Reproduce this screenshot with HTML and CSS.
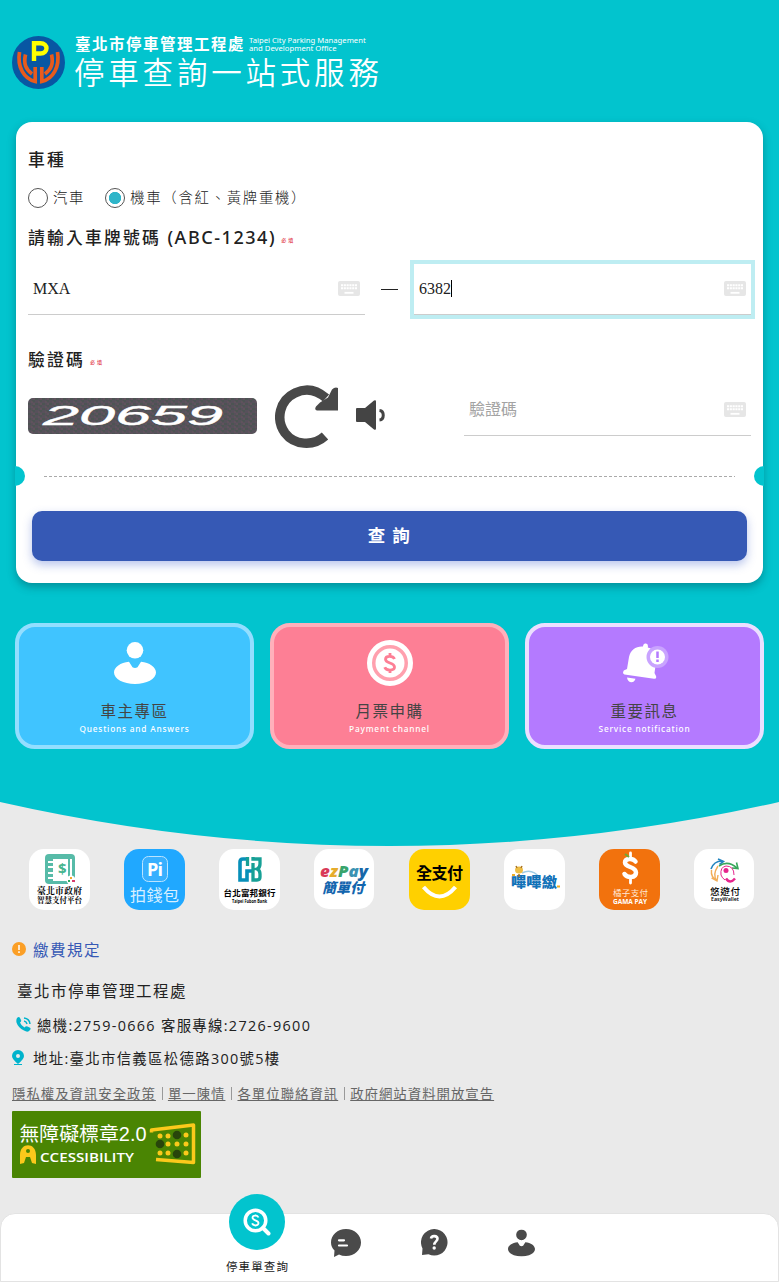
FILE: index.html
```html
<!DOCTYPE html>
<html lang="zh-Hant">
<head>
<meta charset="utf-8">
<title>停車查詢一站式服務</title>
<link rel="stylesheet" href="styles.css">
</head>
<body>
<svg class="defs" width="0" height="0" aria-hidden="true">
  <symbol id="keyboard" viewBox="0 0 22 15">
    <rect width="22" height="15" rx="2" fill="#e6e6e6"/>
    <path d="M3 4.200h16M3 7.200h16" stroke="#fff" stroke-width="2" stroke-dasharray="2.100 .7"/>
    <path d="M6.500 11.800h9" stroke="#fff" stroke-width="1.800"/>
  </symbol>
  <symbol id="person" viewBox="0 0 42 42">
    <circle cx="21" cy="8.300" r="8.300"/>
    <path d="M15 19.700C6.500 20.500 0 25 0 30.500 0 37 9.400 42 21 42s21-5 21-11.500c0-5.500-6.500-10-15-10.800l-3.500 5.500q-2.500 1.500-5 0z"/>
  </symbol>
</svg>
<div class="hero">
  <header class="header">
    <svg class="logo" viewBox="0 0 53 53">
      <circle cx="26.500" cy="26.500" r="26.500" fill="#0857a3"/>
      <g fill="none" stroke="#e95b1c" stroke-width="3.700">
        <path d="M7.500 16C5 31 12 43 23.200 45.500V31"/>
        <path d="M13.500 18.500C11.500 28 13.500 33 20 38"/>
        <path d="M45.500 16C48 31 41 43 29.800 45.500V31"/>
        <path d="M39.500 18.500C41.500 28 39.500 33 33 38"/>
      </g>
      <path d="M22 25V7.200h6.500c8 0 8 10.300 0 10.300H22" fill="none" stroke="#ff0" stroke-width="4.400"/>
    </svg>
    <div class="brand">
      <div class="brand-top">
        <span class="brand-name">臺北市停車管理工程處</span>
        <span class="brand-en">Taipei City Parking Management<br>and Development Office</span>
      </div>
      <h1 class="brand-title">停車查詢一站式服務</h1>
    </div>
  </header>

  <main class="card">
    <h2 class="label label-type">車種</h2>
    <div class="radios">
      <span class="radio"></span><span class="radio-text">汽車</span>
      <span class="radio radio-on"></span><span class="radio-text">機車（含紅、黃牌重機）</span>
    </div>
    <h2 class="label label-plate"><span>請輸入車牌號碼 <span class="sample">(ABC-1234)</span></span><small class="required">必填</small></h2>
    <div class="plate">
      <div class="field"><span>MXA</span><svg class="kb"><use href="#keyboard"/></svg></div>
      <span class="dash"></span>
      <div class="field focused"><span class="caret">6382</span><svg class="kb"><use href="#keyboard"/></svg></div>
    </div>
    <h2 class="label label-code">驗證碼<small class="required">必填</small></h2>
    <div class="verify">
      <svg class="captcha" viewBox="0 0 229 36">
        <defs><pattern id="noise" width="7" height="5" patternUnits="userSpaceOnUse">
          <rect width="7" height="5" fill="#57515b"/><path d="M0 1h3M4 3h3" stroke="#42574b"/><path d="M3 4h2M5 1h2" stroke="#69545f"/>
        </pattern></defs>
        <rect width="229" height="36" rx="5" fill="url(#noise)"/>
        <text x="15" y="26.500" textLength="180" lengthAdjust="spacingAndGlyphs" class="captcha-text">20659</text>
      </svg>
      <svg class="refresh" viewBox="0 0 63 63">
        <path d="M50 51C38 62 19 60 10 48 0 34 5 15 20 8q16-8 31 5" fill="none" stroke="#484848" stroke-width="9.500"/>
        <path d="M63 3v22.500H42q-3-1-1-4l4-4 8-5 4-8q3-3 6-1.500z" fill="#484848"/>
      </svg>
      <svg class="speaker" viewBox="0 0 29 30">
        <path d="M1 8h8l9-7.500q2-1 2 1v27q0 2-2 1L9 22H1q-1 0-1-1V9q0-1 1-1z" fill="#444"/>
        <path d="M23.500 10.500c5 .5 5 9 0 9.500" fill="none" stroke="#444" stroke-width="3"/>
      </svg>
      <div class="field code"><span class="placeholder">驗證碼</span><svg class="kb"><use href="#keyboard"/></svg></div>
    </div>
    <div class="tear"></div>
    <button class="submit">查 詢</button>
  </main>

  <nav class="tiles">
    <a class="tile blue">
      <svg class="tile-icon person" viewBox="0 0 42 42"><use href="#person"/></svg>
      <span class="tile-name">車主專區</span><span class="tile-en">Questions and Answers</span>
    </a>
    <a class="tile pink">
      <svg class="tile-icon coin" viewBox="0 0 46 46">
        <circle cx="23" cy="23" r="20.500" fill="#ffa0ae" stroke="#fff" stroke-width="5"/>
        <circle cx="23" cy="23" r="14.500"/>
        <path d="M27.500 19c-1.500-3.500-9-3.500-9 .3 0 4.500 9 3 9 7.700 0 4-8.500 4-9.800.3M23 13v3m0 14v3" fill="none" stroke="#fd7f95" stroke-width="2.800"/>
      </svg>
      <span class="tile-name">月票申購</span><span class="tile-en">Payment channel</span>
    </a>
    <a class="tile purple">
      <svg class="tile-icon bell" viewBox="0 0 46 40">
        <path d="M20 3.500q.3-3.500 3-3 2.500.5 1.800 4C33 7 34 12 33 19l-1.500 11 1.500 3q1 3-2 2.800L1.500 31.500Q-1 30.500.8 27.500L4 26l2-12C7.500 7 13 3 20 3.500zM4 34.500l8.500 1.200C11 41 4.500 40 4 34.500z"/>
        <circle cx="34.500" cy="14" r="11" fill="#c9a3ff"/>
        <circle cx="34.500" cy="14" r="7.500"/>
        <path d="M34.500 8.500v6.500m0 1.500v2.500" stroke="#b47aff" stroke-width="2.500"/>
      </svg>
      <span class="tile-name">重要訊息</span><span class="tile-en">Service notification</span>
    </a>
  </nav>
</div>
<svg class="wave" viewBox="0 0 779 44" preserveAspectRatio="none"><path d="M0 0Q389.500 88 779 0z" fill="#02c4ce"/></svg>

<section class="apps">
  <svg class="app" viewBox="0 0 61 61">
    <rect width="61" height="61" rx="15" fill="#fff"/>
    <rect x="16" y="5" width="30" height="30" rx="4" fill="#57bba8"/>
    <path d="M24 10h15v22H24z" fill="#fff"/><path d="M42 10v18" stroke="#fff" stroke-width="2"/>
    <path d="M19 13h6m-6 5h6m-6 6h6m-6 5h6" stroke="#fff" stroke-width="2"/>
    <text x="29" y="25" class="t-sans" font-size="15" font-weight="700" fill="#46b58f">$</text>
    <circle cx="42" cy="31" r="4.500" fill="#fff"/><path d="M39 32h2" stroke="#33a75c" stroke-width="2"/><path d="M41 29h2" stroke="#f3a72e" stroke-width="2"/><path d="M43 32h3" stroke="#d83b6b" stroke-width="2"/>
    <text x="8" y="45" textLength="45" class="t-serif" font-size="8.800">臺北市政府</text>
    <text x="8" y="53.500" textLength="45" class="t-serif" font-size="7.500">智慧支付平台</text>
  </svg>
  <svg class="app" viewBox="0 0 61 61">
    <rect width="61" height="61" rx="15" fill="#20a8ff"/>
    <rect x="18.500" y="7.500" width="25" height="25" rx="6" fill="#38b0ff" stroke="#bbe4ff"/>
    <text x="23" y="26.500" textLength="16" class="t-sans" font-size="18" font-weight="700" fill="#fff">Pi</text>
    <text x="6" y="51.500" textLength="49" class="t-sans" font-size="16" fill="#d8efff">拍錢包</text>
  </svg>
  <svg class="app" viewBox="0 0 61 61">
    <rect width="61" height="61" rx="15" fill="#fff"/>
    <path d="M29 10h-5q-3 0-3 3v18h7V22h6" fill="none" stroke="#078fb9" stroke-width="3.600"/>
    <path d="M28.500 8v9M34 8v2h7v5q0 4-3 5 3 1 3 5v3q0 3-3 3h-4V14" fill="none" stroke="#17a096" stroke-width="3.300"/>
    <text x="4.500" y="46.500" textLength="52" class="t-sans" font-size="8.500" font-weight="700">台北富邦銀行</text>
    <text x="13" y="53.500" textLength="35" lengthAdjust="spacingAndGlyphs" class="t-sans" font-size="4.300" font-weight="700">Taipei Fubon Bank</text>
  </svg>
  <svg class="app" viewBox="0 0 61 61">
    <rect width="60" height="60" rx="15" fill="#fff"/>
    <text x="6" y="27.500" textLength="48" lengthAdjust="spacingAndGlyphs" class="t-sans t-slant" font-size="15.500" font-weight="800"><tspan fill="#d93958">e</tspan><tspan fill="#e6ac2c">z</tspan><tspan fill="#38a46c">P</tspan><tspan fill="#3b92b3">a</tspan><tspan fill="#1768a9">y</tspan></text>
    <text x="8" y="43.500" textLength="42" class="t-sans t-slant" font-size="14" font-weight="900" fill="#1265ae">簡單付</text>
  </svg>
  <svg class="app" viewBox="0 0 61 61">
    <rect width="61" height="61" rx="15" fill="#ffd000"/>
    <text x="7" y="30" textLength="47" class="t-sans" font-size="16" font-weight="700">全支付</text>
    <path d="M14.500 38q16 19 32 0" fill="none" stroke="#fff" stroke-width="4"/>
  </svg>
  <svg class="app" viewBox="0 0 61 61">
    <rect width="61" height="61" rx="15" fill="#fff"/>
    <path d="M18 24Q28 19 36 29" fill="none" stroke="#9fcce5" stroke-width="1.500"/>
    <text x="7" y="37.500" textLength="46" lengthAdjust="spacingAndGlyphs" class="t-sans" font-size="14" font-weight="900" fill="#1272b8">嗶嗶繳</text>
    <ellipse cx="15" cy="21" rx="4" ry="3.500" fill="#eebe45"/><path d="M12 17l1 2m5-2-1 2M15 25v3" stroke="#a97320" stroke-width="1.500"/>
    <path d="M53 37.500h3" stroke="#f1ad25" stroke-width="2"/><path d="M8 26h3" stroke="#f1ad25" stroke-width="2"/>
  </svg>
  <svg class="app" viewBox="0 0 61 61">
    <rect width="61" height="61" rx="15" fill="#f2720d"/>
    <path d="M36.500 12.500c-3-4-10.500-3-10.500 1 0 5.500 11 3.500 11 10 0 6-9 5.500-11.500 1.500" fill="none" stroke="#fff" stroke-width="4.500" stroke-linecap="round"/>
    <path d="M31.500 4v6M31.500 29v5" stroke="#fff" stroke-width="2.800" stroke-linecap="round"/>
    <path d="m26 5 4 3" stroke="#70a936" stroke-width="2"/>
    <text x="14" y="47" textLength="35" class="t-sans" font-size="8.500" fill="#ffe8d6">橘子支付</text>
    <text x="14" y="54.800" textLength="34" lengthAdjust="spacingAndGlyphs" class="t-sans" font-size="6.800" font-weight="700" fill="#fff">GAMA PAY</text>
  </svg>
  <svg class="app" viewBox="0 0 61 61">
    <rect width="60" height="60" rx="15" fill="#fff"/>
    <path d="M17 20Q20 11.500 29 12m-5-2 5.500 2.500-4 3" fill="none" stroke="#2485bf" stroke-width="1.600"/>
    <path d="M25 17q9-6 18 2m-5 0 6 .5-1.500-6" fill="none" stroke="#38a85b" stroke-width="1.600"/>
    <path d="M23 32q-5-6 1-15M17.500 21q-1 7 5.500 11m-5.500-3 5.500 3 1-6" fill="none" stroke="#f1ad58" stroke-width="1.400"/>
    <path d="M40 26q0-9-8-9-6 1-5 9 1 3 4 5" fill="none" stroke="#e6258d" stroke-width="1"/>
    <circle cx="32" cy="21.500" r="2.500" fill="#e6258d"/><path d="M32 29.500q4 6 9 0" fill="none" stroke="#e6258d" stroke-width="2.500"/>
    <text x="16" y="45.500" textLength="30" class="t-sans" font-size="9.500" font-weight="500">悠遊付</text>
    <text x="17" y="52" textLength="28" lengthAdjust="spacingAndGlyphs" class="t-sans" font-size="5.200" font-weight="600">EasyWallet</text>
  </svg>
</section>

<footer class="footer">
  <a class="rule">
    <svg class="rule-icon" viewBox="0 0 14 14"><circle cx="7" cy="7" r="7" fill="#fb9f26"/><path d="M7 3v5m0 1.300v1.700" stroke="#fff" stroke-width="1.500"/></svg>繳費規定
  </a>
  <p class="org">臺北市停車管理工程處</p>
  <p class="line phone">
    <svg class="phone-icon" viewBox="0 0 15 15"><path d="M1 1q2-2 3 0l1 2q.7 1-1 2.500 1 3 4.500 5 1.500-2 3-1l2 1q2 1 .5 2.500Q12 16 8 13.500 2 10.500.5 5.500 0 2.500 1 1z" fill="#00b3cc"/><path d="M8 4q2.500.5 3 3M8 1q5.500.7 6 6" fill="none" stroke="#00b3cc" stroke-width="1.500"/></svg>
    總機:2759-0666 客服專線:2726-9600
  </p>
  <p class="line address">
    <svg class="pin-icon" viewBox="0 0 12 15"><path fill-rule="evenodd" d="M6 0a6 6 0 0 1 6 6q0 3-6 8Q0 9 0 6a6 6 0 0 1 6-6zm0 4a2 2 0 1 0 0 4 2 2 0 0 0 0-4z" fill="#00b3cc"/><path d="M2 14.500h8" stroke="#00b3cc"/></svg>
    地址:臺北市信義區松德路300號5樓
  </p>
  <p class="links"><a>隱私權及資訊安全政策</a><i></i><a>單一陳情</a><i></i><a>各單位聯絡資訊</a><i></i><a>政府網站資料開放宣告</a></p>
  <svg class="badge" viewBox="0 0 189 67">
    <rect width="189" height="67" rx="1" fill="#4a8503"/>
    <text x="7.500" y="30" textLength="127" lengthAdjust="spacingAndGlyphs" class="t-badge" font-size="19.500" fill="#fff">無障礙標章2.0</text>
    <path d="M8 53V44c0-13 16-13 16 0v9l-4-1-2-6h-4l-2 6z" fill="#fbc91b"/><circle cx="16" cy="40" r="2" fill="#4a8503"/>
    <text x="28" y="51" textLength="94" lengthAdjust="spacingAndGlyphs" class="t-sans" font-size="12.500" font-weight="600" fill="#fff">CCESSIBILITY</text>
    <path d="M139.500 21.500v-2.500l42-5v37.500l-37.500-3" fill="none" stroke="#fbc91b" stroke-width="3.500" stroke-linejoin="round"/>
    <g fill="#fbc91b"><circle cx="148" cy="25" r="2.500"/><circle cx="156" cy="25" r="2.500"/><circle cx="174" cy="24" r="2.500"/><circle cx="156" cy="33" r="2.500"/><circle cx="165" cy="33" r="2.500"/><circle cx="174" cy="33" r="2.500"/><circle cx="148" cy="42" r="2.500"/><circle cx="156" cy="42" r="2.500"/><circle cx="174" cy="42" r="2.500"/></g>
    <g fill="#28450b"><circle cx="165" cy="24" r="4.300"/><circle cx="148" cy="33" r="4.300"/><circle cx="165" cy="43" r="4.300"/></g>
  </svg>
</footer>

<nav class="tabbar">
  <a class="tab tab-active">
    <span class="bubble"><svg class="search" viewBox="0 0 28 28"><circle cx="12.500" cy="12.500" r="10.300" fill="none" stroke="#fff" stroke-width="3.500"/><path d="m20 20 5.500 5.500" stroke="#fff" stroke-width="4" stroke-linecap="round"/><path d="M15.500 9.500c-1-2.500-6-2.500-6 .3s6 2.200 6 5.200-5.500 3-6.300.3M12.500 6.500v2m0 8v2" fill="none" stroke="#fff" stroke-width="1.800"/></svg></span>
    <span class="tab-name">停車單查詢</span>
  </a>
  <a class="tab"><svg class="tab-icon" viewBox="0 0 30 28" width="30" height="28"><path d="M15 0c8.500 0 15 6 15 13.500S23.500 27 15 27q-4 0-7-1.500L3 28l.5-6.500Q0 18 0 13.500C0 6 6.500 0 15 0z" fill="#4a4a4a"/><path d="M8 11.300h5M8 16.500h8" stroke="#fff" stroke-width="2.200" stroke-linecap="round"/></svg></a>
  <a class="tab"><svg class="tab-icon" viewBox="0 0 27 27" width="27" height="27"><path d="M13.500 0a13.300 13.300 0 1 1-6 25.300L1 26l.5-6.500A13.300 13.300 0 0 1 13.500 0z" fill="#4a4a4a"/><path d="M10 9.500c.5-3.500 6.500-3 6.500.3 0 2.700-3.200 2.500-3.200 6" fill="none" stroke="#fff" stroke-width="2.600"/><circle cx="13.200" cy="19" r="1.700" fill="#fff"/></svg></a>
  <a class="tab"><svg class="tab-person" viewBox="0 0 42 42"><use href="#person"/></svg></a>
</nav>
</body>
</html>
```
FILE: styles.css
```css
* { box-sizing: border-box; }
body {
  margin: 0;
  height: 1282px;
  display: flex;
  flex-direction: column;
  background: #eaeaea;
  color: #212121;
  font-family: "Open Sans", "Noto Sans CJK TC", sans-serif;
  overflow: hidden;
}
h1, h2, p { margin: 0; font-weight: 400; white-space: nowrap; }
svg { display: block; flex: none; }
.defs { position: absolute; }

.hero { height: 802px; flex: none; background: #02c4ce; }
.header { height: 122px; padding: 36px 12px 0; display: flex; gap: 10px; color: #fff; }
.logo { width: 53px; height: 53px; }
.brand { display: flex; flex-direction: column; }
.brand-top { display: flex; height: 17px; align-items: center; gap: 4px; white-space: nowrap; }
.brand-name { font-size: 15.500px; letter-spacing: 1.500px; font-weight: 700; line-height: 17px; }
.brand-en { font: 7.700px/8.500px "Noto Sans", sans-serif; letter-spacing: 0; margin-top: -1px; }
.brand-title { font-size: 30.500px; letter-spacing: 3.800px; font-weight: 350; line-height: 38px; margin: 0 0 0 -1px; }

.card {
  position: relative;
  width: 747px;
  height: 461px;
  margin-left: 16px;
  padding: 23px 12px 0;
  border-radius: 16px;
  background: #fff;
  box-shadow: 0 4px 9px rgba(0, 60, 70, .38);
}
.card::before, .card::after {
  content: "";
  position: absolute;
  top: 344px;
  width: 10px;
  height: 20px;
  background: #02c4ce;
}
.card::before { left: -1px; border-radius: 0 10px 10px 0; }
.card::after { right: -1px; border-radius: 10px 0 0 10px; }
.label { display: flex; align-items: center; font-size: 16.800px; letter-spacing: 2.200px; font-weight: 500; }
.label-type { height: 28px; }
.radios { display: flex; align-items: center; height: 32px; margin-top: 9px; font-size: 14.400px; letter-spacing: 1.700px; font-weight: 300; white-space: nowrap; }
.radio { width: 20px; height: 20px; border: 1px solid #555; border-radius: 50%; background: #fff; margin-right: 5px; flex: none; }
.radio-text { line-height: 20px; margin-top: -1px; }
.radio-on { margin-left: 20px; background: radial-gradient(circle, #2fb5c9 5.800px, #fff 6.500px); }
.label-plate { height: 46px; }
.sample { font-family: "Noto Sans", sans-serif; font-size: 18px; letter-spacing: 1.550px; font-weight: 500; line-height: 20px; }
.required { font-size: 5px; letter-spacing: 2px; margin-left: 5px; padding-top: 4px; color: #e03245; }
.plate { display: flex; align-items: center; height: 55px; margin-top: 1px; }
.plate .field { margin-top: 2px; }
.field {
  display: flex;
  align-items: center;
  justify-content: space-between;
  width: 337px;
  height: 51px;
  padding: 0 5px 1px;
  border-bottom: 1px solid #ccc;
  font: 16px "Liberation Serif", serif;
}
.kb { width: 22px; height: 15px; }
.dash { width: 17px; height: 1px; margin: 1px 16px 0; background: #222; }
.focused { outline: 4px solid #beedf2; }
.caret { border-right: 1px solid #000; line-height: 17px; }
.label-code { height: 82px; padding-top: 4px; }
.verify { display: flex; align-items: center; height: 63px; margin-top: -13px; }
.captcha { width: 229px; height: 36px; margin-top: -1px; }
.captcha-text { font: italic 28px "Liberation Sans", sans-serif; fill: #fff; stroke: #fff; stroke-width: .4px; }
.refresh { width: 63px; height: 63px; margin-left: 18px; filter: blur(.7px); }
.speaker { width: 29px; height: 30px; margin: -3px 0 0 18px; }
.code { width: 287px; margin-left: auto; align-self: flex-start; }
.placeholder { font: 16px "Noto Sans CJK TC", sans-serif; color: #a3a3a3; margin-top: -3px; }
.tear { height: 1px; margin: 28px 16px 34px; background: repeating-linear-gradient(90deg, #aaa 0 3px, transparent 3px 5px); }
.submit {
  display: block;
  width: 715px;
  height: 50px;
  margin-left: 4px;
  padding: 0 0 3px;
  border: 0;
  border-radius: 10px;
  background: #3659b5;
  color: #fff;
  box-shadow: 0 4px 10px rgba(54, 89, 200, .35);
  font: 700 17.500px "Noto Sans CJK TC", sans-serif;
  letter-spacing: 1.500px;
}

.tiles { display: flex; gap: 16px; padding: 40px 15px 0; }
.tile { width: 239px; height: 126px; border: 4px solid; border-radius: 20px; display: flex; flex-direction: column; align-items: center; }
.blue { background: #40c4ff; border-color: #93deff; }
.pink { background: #fd7f95; border-color: #ffb0bb; }
.purple { background: #b47aff; border-color: #ebdfff; }
.tile-icon { fill: #fff; }
.person { width: 42px; height: 42px; margin: 15px 0; }
.coin { width: 46px; height: 46px; margin: 13px 0; }
.bell { width: 46px; height: 40px; margin: 16px 0 16px 2px; }
.tile-name { font-size: 15.500px; line-height: 25px; letter-spacing: 1.500px; color: #444; }
.tile-en { font: 500 8.300px/10px "Noto Sans", sans-serif; letter-spacing: .8px; color: #fff; }

.wave { width: 779px; height: 44px; }
.apps { display: flex; gap: 34px; padding: 3px 0 0 29px; }
.app { width: 61px; height: 61px; }
.t-sans { font-family: "Open Sans", "Noto Sans CJK TC", sans-serif; }
.t-badge { font-family: "Liberation Sans", "Noto Sans CJK TC", sans-serif; }
.t-serif { font-family: "Noto Serif CJK TC", "Noto Sans CJK TC", serif; font-weight: 700; }
.t-slant { font-style: italic; }

.footer { padding: 23px 12px 0; height: 303px; flex: none; }
.rule { display: flex; align-items: center; gap: 7px; height: 32px; font-size: 15.500px; letter-spacing: 1.500px; color: #3659b5; }
.rule-icon { width: 14px; height: 14px; }
.org { height: 50px; line-height: 50px; margin-top: 1px; padding-left: 5px; font-size: 15.500px; letter-spacing: 1.500px; }
.line { display: flex; align-items: center; font-size: 14.400px; letter-spacing: 1.320px; }
.phone { height: 16px; padding-left: 4px; gap: 6px; }
.address { height: 50px; gap: 9px; }
.phone-icon { width: 15px; height: 15px; }
.pin-icon { width: 12px; height: 15px; }
.links { display: flex; align-items: center; height: 20px; margin-top: 1px; font-size: 13.400px; letter-spacing: 1px; color: #666; }
.links a { text-decoration: underline; }
.links i { width: 1px; height: 13px; margin: 0 5px 0 6px; background: #999; }
.badge { width: 189px; height: 67px; margin-top: 8px; }

.tabbar { display: flex; height: 69px; flex: none; padding-left: 212px; background: #fff; border: 1px solid #e3e3e3; border-radius: 15px 15px 0 0; }
.tab { width: 88px; display: flex; flex-direction: column; align-items: center; padding-top: 15px; }
.tab-icon { margin-left: 2px; }
.tab-active { padding-top: 0; margin-top: -20px; }
.bubble { width: 56px; height: 56px; flex: none; border-radius: 50%; background: #02c4ce; display: flex; align-items: center; justify-content: center; }
.search { width: 28px; height: 28px; }
.tab-name { font-size: 11.500px; letter-spacing: 1.100px; line-height: 20px; margin: 7px 0 0 1px; white-space: nowrap; }
.tab-person { width: 27px; height: 28px; fill: #4a4a4a; }
```
